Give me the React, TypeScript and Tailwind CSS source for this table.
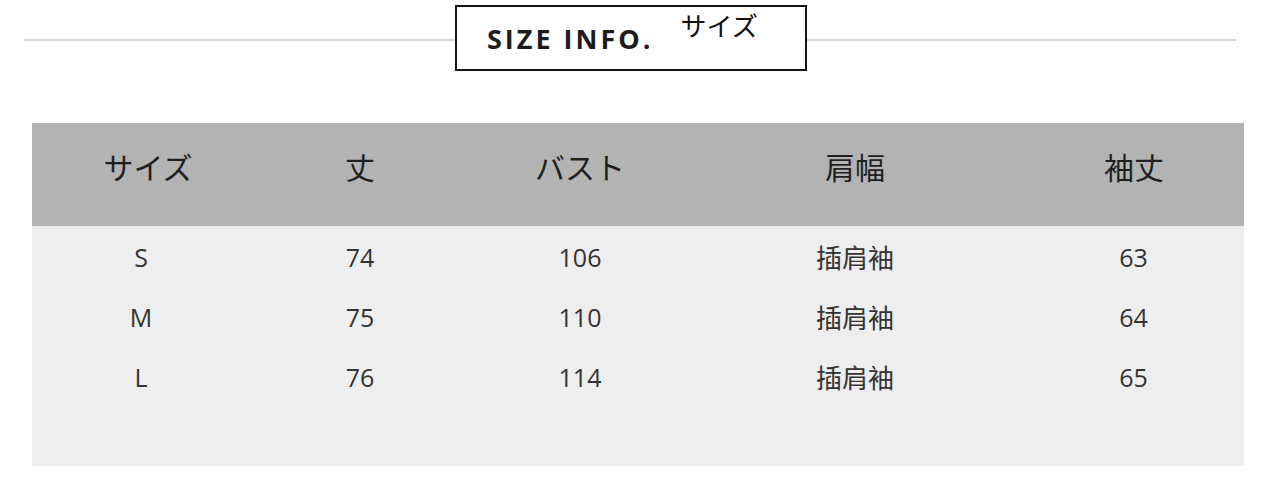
const latin = "font-['Open_Sans','Noto_Sans_CJK_JP',sans-serif]";
const jp = "font-['Noto_Sans_CJK_JP',sans-serif]";
const sc = "font-['Noto_Sans_CJK_SC',sans-serif]";

const headers = ["サイズ", "丈", "バスト", "肩幅", "袖丈"];

const rows = [
  { size: "S", length: "74", bust: "106", shoulder: "插肩袖", sleeve: "63" },
  { size: "M", length: "75", bust: "110", shoulder: "插肩袖", sleeve: "64" },
  { size: "L", length: "76", bust: "114", shoulder: "插肩袖", sleeve: "65" },
];

const cols = "grid grid-cols-[224px_208px_232px_318px_230px]";

function Title() {
  return (
    <div className="flex items-start pt-[5px]">
      <div className="ml-[24px] mt-[34px] h-[2px] w-[431px] bg-[#d6d6d6]" />
      <div className="flex h-[66px] w-[352px] items-start border-2 border-[#141414] bg-white">
        <span className={`${latin} ml-[30px] mt-[18px] text-[27px] font-bold leading-none tracking-[3px] text-[#1c1c1c]`}>
          SIZE INFO.
        </span>
        <span className={`${jp} ml-[27px] mt-[5px] text-[26px] leading-none text-[#111]`}>サイズ</span>
      </div>
      <div className="mt-[34px] h-[2px] w-[429px] bg-[#d6d6d6]" />
    </div>
  );
}

export default function App() {
  return (
    <div className="h-[485px] w-[1280px] overflow-hidden bg-white">
      <Title />
      <div className="ml-[32px] mt-[52px] w-[1212px]">
        <div className={`${cols} h-[103px] bg-[#b3b3b3] pt-[28px]`}>
          {headers.map((h, i) => (
            <div
              key={h}
              className={`${jp} text-center text-[30px] leading-none text-[#1f1f1f] ${i === 0 ? "pl-2" : ""} ${i === 4 ? "pl-[10px]" : ""}`}
            >
              {h}
            </div>
          ))}
        </div>
        <div className="h-[240px] bg-[#eeeeee] pt-px">
          {rows.map((r) => (
            <div key={r.size} className={`${cols} h-[60px] items-center text-[#333] text-[25px] leading-none`}>
              <div className={`${latin} pr-[6px] text-center`}>{r.size}</div>
              <div className={`${latin} text-center`}>{r.length}</div>
              <div className={`${latin} text-center`}>{r.bust}</div>
              <div className={`${sc} text-center text-[26px]`}>{r.shoulder}</div>
              <div className={`${latin} pl-[9px] text-center`}>{r.sleeve}</div>
            </div>
          ))}
        </div>
      </div>
    </div>
  );
}
